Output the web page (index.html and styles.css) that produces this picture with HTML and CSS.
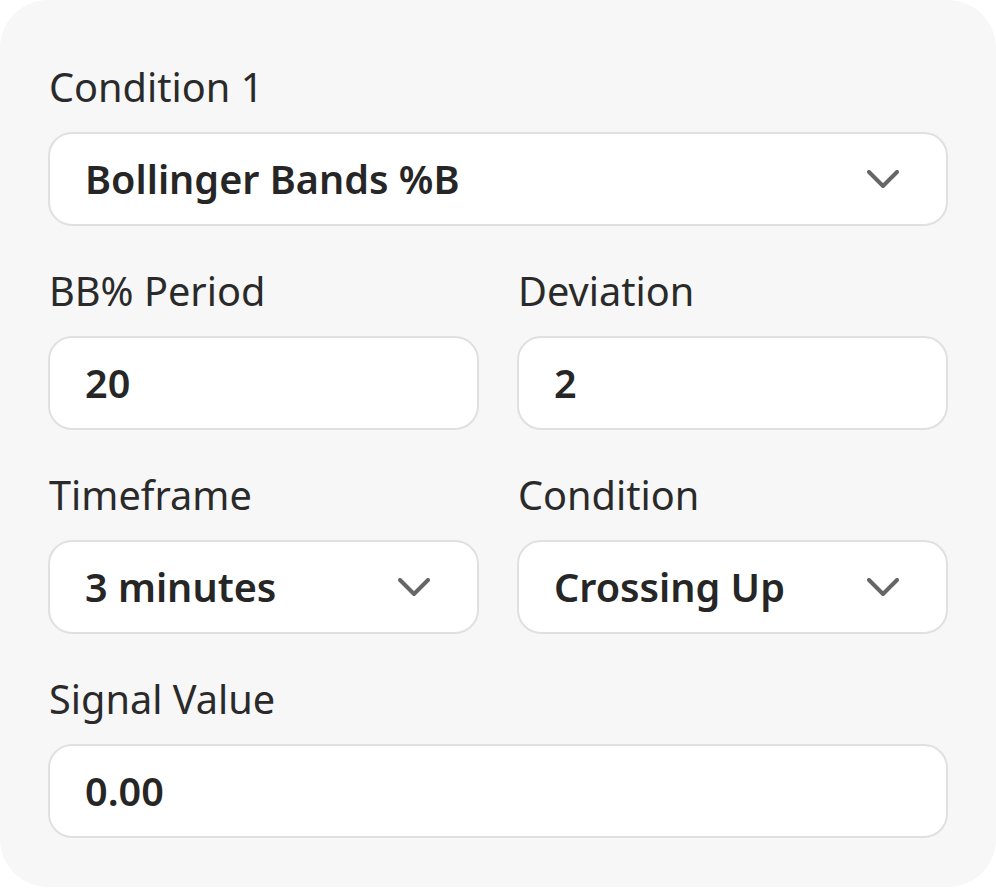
FILE: index.html
```html
<!DOCTYPE html>
<html lang="en">
<head>
<meta charset="utf-8">
<title>Condition</title>
<link rel="stylesheet" href="styles.css">
</head>
<body>
<div class="card">
  <div class="field">
    <div class="label">Condition 1</div>
    <div class="box select">
      <span class="value">Bollinger Bands %B</span>
      <svg class="chev" width="32" height="19" viewBox="0 0 32 19"><polyline points="2,2 16,16 30,2" fill="none" stroke="#666" stroke-width="4" stroke-linecap="round" stroke-linejoin="round"/></svg>
    </div>
  </div>
  <div class="row">
    <div class="field">
      <div class="label">BB% Period</div>
      <div class="box"><span class="value">20</span></div>
    </div>
    <div class="field">
      <div class="label">Deviation</div>
      <div class="box"><span class="value">2</span></div>
    </div>
  </div>
  <div class="row">
    <div class="field">
      <div class="label">Timeframe</div>
      <div class="box select">
        <span class="value">3 minutes</span>
        <svg class="chev" width="32" height="19" viewBox="0 0 32 19"><polyline points="2,2 16,16 30,2" fill="none" stroke="#666" stroke-width="4" stroke-linecap="round" stroke-linejoin="round"/></svg>
      </div>
    </div>
    <div class="field">
      <div class="label">Condition</div>
      <div class="box select">
        <span class="value">Crossing Up</span>
        <svg class="chev" width="32" height="19" viewBox="0 0 32 19"><polyline points="2,2 16,16 30,2" fill="none" stroke="#666" stroke-width="4" stroke-linecap="round" stroke-linejoin="round"/></svg>
      </div>
    </div>
  </div>
  <div class="field">
    <div class="label">Signal Value</div>
    <div class="box"><span class="value">0.00</span></div>
  </div>
</div>
</body>
</html>
```
FILE: styles.css
```css
* { box-sizing: border-box; }
html, body { margin: 0; padding: 0; background: #ffffff; }
body { font-family: "Noto Sans", "Open Sans", sans-serif; color: #262626; }
.card {
  width: 996px;
  height: 887px;
  background: #f7f7f7;
  border-radius: 48px;
  padding: 63px 48px 48px 48px;
  display: flex;
  flex-direction: column;
  gap: 41px;
}
.row {
  display: grid;
  grid-template-columns: 1fr 1fr;
  column-gap: 38px;
}
.field { display: flex; flex-direction: column; }
.label {
  font-size: 39.7px;
  line-height: 48px;
  margin-bottom: 21px;
  color: #2a2a2a;
  padding-left: 1px;
}
.box {
  height: 94px;
  background: #ffffff;
  border: 2px solid #e0e0e0;
  border-radius: 24px;
  padding: 0 47px 0 35px;
  display: flex;
  align-items: center;
  justify-content: space-between;
}
.value {
  font-size: 39.6px;
  font-weight: 600;
  color: #262626;
  line-height: 48px;
}
.chev { flex: none; display: block; }
```
